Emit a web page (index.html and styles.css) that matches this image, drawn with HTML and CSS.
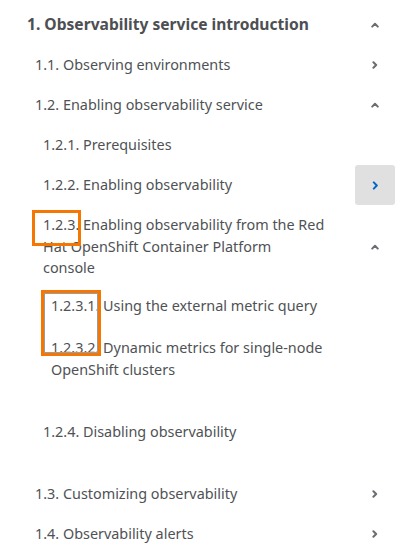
FILE: index.html
```html
<!DOCTYPE html>
<html lang="en">
<head>
<meta charset="utf-8">
<title>Observability TOC</title>
<link rel="stylesheet" href="styles.css">
</head>
<body>
<nav class="toc">
  <ul class="list level-0">
    <li class="item">
      <div class="row">
        <span class="label title">1. Observability service introduction</span>
        <span class="toggle"><svg class="chev" width="8" height="6" viewBox="0 0 8 6"><polyline points="1.2,4.6 4,1.8 6.8,4.6"/></svg></span>
      </div>
      <ul class="list level-1 open">
        <li class="item">
          <div class="row">
            <span class="label">1.1. Observing environments</span>
            <span class="toggle"><svg class="chev" width="6" height="8" viewBox="0 0 6 8"><polyline points="1.4,1.2 4.2,4 1.4,6.8"/></svg></span>
          </div>
        </li>
        <li class="item">
          <div class="row">
            <span class="label">1.2. Enabling observability service</span>
            <span class="toggle"><svg class="chev" width="8" height="6" viewBox="0 0 8 6"><polyline points="1.2,4.6 4,1.8 6.8,4.6"/></svg></span>
          </div>
          <ul class="list level-2 open">
            <li class="item">
              <div class="row"><span class="label">1.2.1. Prerequisites</span></div>
            </li>
            <li class="item">
              <div class="row">
                <span class="label">1.2.2. Enabling observability</span>
                <span class="toggle hover"><svg class="chev blue" width="7" height="9" viewBox="0 0 7 9"><polyline points="1.8,1.4 4.8,4.5 1.8,7.6"/></svg></span>
              </div>
            </li>
            <li class="item">
              <div class="row">
                <span class="label"><span class="num mark">1.2.3.</span> Enabling observability from the Red Hat OpenShift Container Platform<br>console</span>
                <span class="toggle"><svg class="chev" width="8" height="6" viewBox="0 0 8 6"><polyline points="1.2,4.6 4,1.8 6.8,4.6"/></svg></span>
              </div>
              <ul class="list level-3 open">
                <li class="item">
                  <div class="row first"><span class="label">1.2.3.1. Using the external metric query</span></div>
                </li>
                <li class="item">
                  <div class="row"><span class="label">1.2.3.2. Dynamic metrics for single-node OpenShift clusters</span></div>
                </li>
                <li class="box-tall" aria-hidden="true"></li>
              </ul>
            </li>
            <li class="item">
              <div class="row"><span class="label">1.2.4. Disabling observability</span></div>
            </li>
          </ul>
        </li>
        <li class="item">
          <div class="row">
            <span class="label">1.3. Customizing observability</span>
            <span class="toggle"><svg class="chev" width="6" height="8" viewBox="0 0 6 8"><polyline points="1.4,1.2 4.2,4 1.4,6.8"/></svg></span>
          </div>
        </li>
        <li class="item">
          <div class="row">
            <span class="label">1.4. Observability alerts</span>
            <span class="toggle"><svg class="chev" width="6" height="8" viewBox="0 0 6 8"><polyline points="1.4,1.2 4.2,4 1.4,6.8"/></svg></span>
          </div>
        </li>
      </ul>
    </li>
  </ul>
</nav>
</body>
</html>
```
FILE: styles.css
```css
* { box-sizing: border-box; }
html, body { margin: 0; padding: 0; background: #ffffff; }
body {
  font-family: "Noto Sans", "Open Sans", sans-serif;
  font-size: 14.4px;
  color: #4f5255;
  width: 408px;
  height: 549px;
  overflow: hidden;
}
.toc { padding: 5px 13px 0 27px; }
.list { list-style: none; margin: 0; padding: 0; }
.list.open { margin-bottom: 22px; }
.level-1 { padding-left: 8px; }
.level-2 { padding-left: 8px; }
.level-3 { padding-left: 8px; position: relative; }
.row {
  display: flex;
  align-items: center;
  justify-content: space-between;
  min-height: 40px;
  padding: 9.25px 0;
  line-height: 21.5px;
}
.row.first { margin-top: -2px; margin-bottom: 2px; }
.label { flex: 1; padding-right: 12px; }
.title { font-weight: 700; font-size: 15.6px; color: #4d4f52; }
.toggle {
  flex: 0 0 40px;
  width: 40px;
  height: 40px;
  margin: -9.25px 0;
  display: flex;
  align-items: center;
  justify-content: center;
  border-radius: 3px;
}
.toggle.hover { background: #e0e0e0; }
.chev polyline {
  fill: none;
  stroke: #6a6e73;
  stroke-width: 2;
  stroke-linecap: round;
  stroke-linejoin: round;
}
.chev.blue polyline { stroke: #0066cc; }
.num { position: relative; }
.mark::after {
  content: "";
  position: absolute;
  left: -11px;
  right: -2px;
  top: 50%;
  margin-top: -15px;
  height: 30px;
  border: 3px solid #f57600;
}
.box-tall {
  position: absolute;
  left: -2px;
  top: 4px;
  width: 60px;
  height: 66px;
  border: 3px solid #f57600;
  box-shadow: inset 0 0 0 1px #9a9da0;
}
```
